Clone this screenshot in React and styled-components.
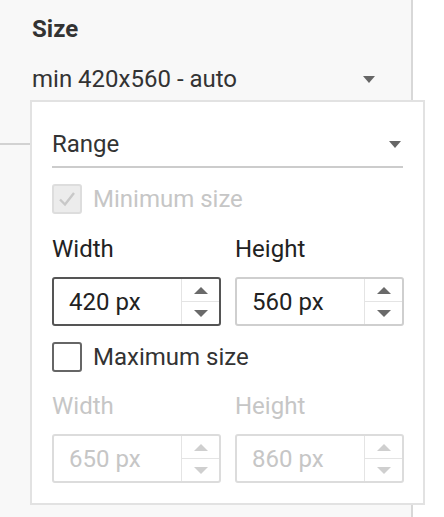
import React from "react";
import styled, { createGlobalStyle } from "styled-components";

const Global = createGlobalStyle`
  html, body {
    margin: 0;
    padding: 0;
    background: #ffffff;
  }
  body {
    font-family: Roboto, "Liberation Sans", sans-serif;
    -webkit-font-smoothing: antialiased;
  }
`;

const Page = styled.div`
  position: relative;
  width: 444px;
  height: 517px;
  overflow: hidden;
  background: #ffffff;
`;

const Panel = styled.div`
  width: 411px;
  height: 517px;
  background: #f8f8f8;
  border-right: 2px solid #d8d8d8;
  display: flex;
  flex-direction: column;
`;

const Section = styled.div`
  padding: 15px 36px 0 32px;
  height: 145px;
  box-sizing: border-box;
  border-bottom: 2px solid #d2d2d2;
`;

const Title = styled.div`
  font-size: 24px;
  font-weight: 700;
  color: #333333;
  line-height: 28px;
`;

const Select = styled.div`
  display: flex;
  align-items: center;
  justify-content: space-between;
  margin-top: 22px;
  font-size: 24px;
  color: #333333;
  line-height: 28px;
`;

const Caret = styled.span`
  width: 0;
  height: 0;
  border-left: 6px solid transparent;
  border-right: 6px solid transparent;
  border-top: 7px solid ${(p) => p.$color || "#666666"};
`;

const Popover = styled.div`
  position: absolute;
  top: 100px;
  left: 30px;
  width: 395px;
  height: 405px;
  box-sizing: border-box;
  background: #ffffff;
  border: 2px solid #e2e2e2;
  padding: 20px 20px 0 20px;
  display: flex;
  flex-direction: column;
`;

const RangeSelect = styled.div`
  display: flex;
  align-items: center;
  justify-content: space-between;
  height: 44px;
  padding-right: 2px;
  border-bottom: 2px solid #cccccc;
  font-size: 24px;
  color: #333333;
`;

const CheckRow = styled.label`
  display: flex;
  align-items: center;
  gap: 11px;
  height: 30px;
  margin-top: ${(p) => p.$mt}px;
  font-size: 24px;
  line-height: 28px;
  color: ${(p) => (p.$disabled ? "#c6c6c6" : "#333333")};
`;

const Box = styled.span`
  width: 30px;
  height: 30px;
  box-sizing: border-box;
  border-radius: 3px;
  border: 2px solid ${(p) => (p.$disabled ? "#dddddd" : "#666666")};
  background: ${(p) => (p.$disabled ? "#ececec" : "#ffffff")};
  display: flex;
  align-items: center;
  justify-content: center;
`;

const Grid = styled.div`
  display: grid;
  grid-template-columns: 169px 169px;
  column-gap: 14px;
  margin-top: ${(p) => p.$mt}px;
`;

const Label = styled.div`
  font-size: 24px;
  line-height: 28px;
  color: ${(p) => (p.$disabled ? "#c6c6c6" : "#222222")};
  margin-bottom: 14px;
`;

const Spin = styled.div`
  height: 49px;
  box-sizing: border-box;
  border: 2px solid ${(p) => (p.$focus ? "#555555" : p.$disabled ? "#dcdcdc" : "#cfcfcf")};
  border-radius: 3px;
  display: flex;
  background: #ffffff;
`;

const SpinValue = styled.div`
  flex: 1;
  display: flex;
  align-items: center;
  padding-left: 15px;
  font-size: 24px;
  color: ${(p) => (p.$disabled ? "#c6c6c6" : "#222222")};
`;

const Steps = styled.div`
  width: 37px;
  border-left: 1px solid #e4e4e4;
  display: flex;
  flex-direction: column;
`;

const Step = styled.div`
  flex: 1;
  display: flex;
  align-items: center;
  justify-content: center;
  & + & {
    border-top: 1px solid #e4e4e4;
  }
`;

const Tri = styled.span`
  width: 0;
  height: 0;
  border-left: 7px solid transparent;
  border-right: 7px solid transparent;
  ${(p) =>
    p.$up
      ? `border-bottom: 7px solid ${p.$color};`
      : `border-top: 7px solid ${p.$color};`}
`;

const Check = () => (
  <svg width="20" height="18" viewBox="0 0 20 18">
    <path d="M3 9.5 L8 14.5 L17 3" fill="none" stroke="#c8c8c8" strokeWidth="2.4" />
  </svg>
);

const SpinBox = ({ value, focus, disabled }) => {
  const c = disabled ? "#cfcfcf" : "#6a6a6a";
  return (
    <Spin $focus={focus} $disabled={disabled}>
      <SpinValue $disabled={disabled}>{value}</SpinValue>
      <Steps>
        <Step>
          <Tri $up $color={c} />
        </Step>
        <Step>
          <Tri $color={c} />
        </Step>
      </Steps>
    </Spin>
  );
};

const SizeFields = ({ mt, width, height, disabled, focusFirst }) => (
  <Grid $mt={mt}>
    <div>
      <Label $disabled={disabled}>Width</Label>
      <SpinBox value={width} disabled={disabled} focus={focusFirst} />
    </div>
    <div>
      <Label $disabled={disabled}>Height</Label>
      <SpinBox value={height} disabled={disabled} />
    </div>
  </Grid>
);

export default function App() {
  return (
    <Page>
      <Global />
      <Panel>
        <Section>
          <Title>Size</Title>
          <Select>
            <span>min 420x560 - auto</span>
            <Caret />
          </Select>
        </Section>
      </Panel>
      <Popover>
        <RangeSelect>
          <span>Range</span>
          <Caret />
        </RangeSelect>
        <CheckRow $mt={16} $disabled>
          <Box $disabled>
            <Check />
          </Box>
          Minimum size
        </CheckRow>
        <SizeFields mt={21} width="420 px" height="560 px" focusFirst />
        <CheckRow $mt={16}>
          <Box />
          Maximum size
        </CheckRow>
        <SizeFields mt={20} width="650 px" height="860 px" disabled />
      </Popover>
    </Page>
  );
}
